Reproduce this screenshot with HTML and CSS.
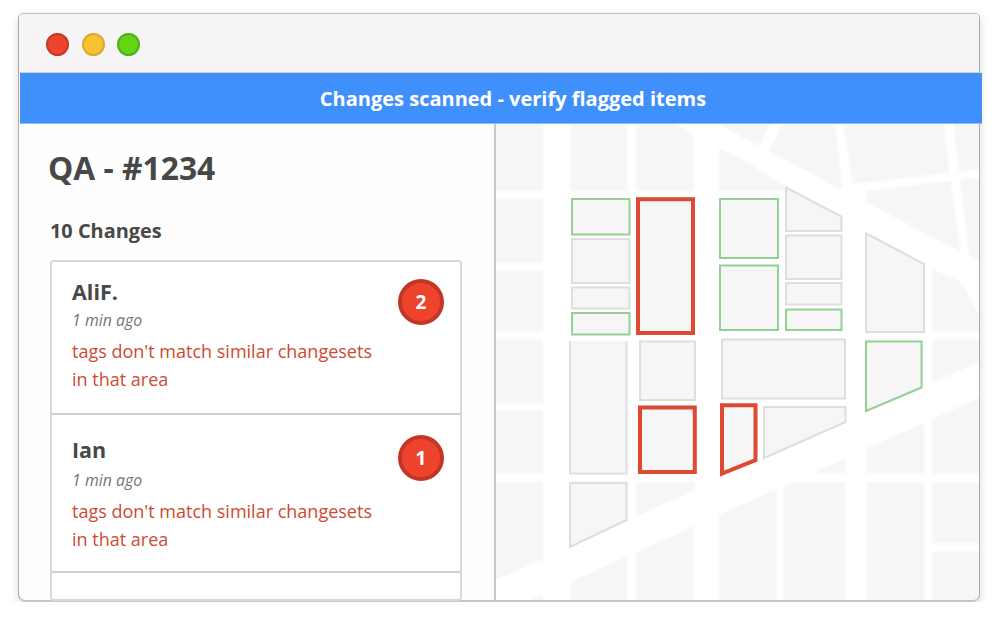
FILE: index.html
```html
<!DOCTYPE html>
<html lang="en">
<head>
<meta charset="utf-8">
<title>QA - #1234</title>
<link rel="stylesheet" href="styles.css">
</head>
<body>
<main class="window">
  <header class="titlebar">
    <span class="dot dot-red"></span>
    <span class="dot dot-yellow"></span>
    <span class="dot dot-green"></span>
  </header>
  <div class="banner">Changes scanned - verify flagged items</div>
  <div class="content">
    <section class="panel">
      <h1>QA - #1234</h1>
      <h2>10 Changes</h2>
      <ul class="changes">
        <li class="change">
          <div class="details">
            <h3>AliF.</h3>
            <time>1 min ago</time>
            <p>tags don't match similar changesets<br>in that area</p>
          </div>
          <span class="count">2</span>
        </li>
        <li class="change change-second">
          <div class="details">
            <h3>Ian</h3>
            <time>1 min ago</time>
            <p>tags don't match similar changesets<br>in that area</p>
          </div>
          <span class="count">1</span>
        </li>
        <li class="change change-empty"></li>
      </ul>
    </section>
    <section class="map">
      <svg viewBox="496 124 483 477" width="483" height="477" aria-label="Map">
        <defs>
          <filter id="soften" x="-5%" y="-5%" width="110%" height="110%"><feGaussianBlur stdDeviation="0.9"/></filter>
        </defs>
        <g class="roads" filter="url(#soften)">
          <rect x="543" y="110" width="28" height="510"/>
          <rect x="627.5" y="110" width="8.500" height="510"/>
          <rect x="694" y="110" width="25" height="510"/>
          <rect x="776" y="470" width="8" height="150"/>
          <rect x="845.500" y="200" width="21" height="420"/>
          <rect x="924.500" y="250" width="7.500" height="370"/>
          <rect x="480" y="191" width="310" height="7.500"/>
          <rect x="480" y="263" width="70" height="7.500"/>
          <rect x="480" y="332" width="510" height="7.500"/>
          <rect x="480" y="403.500" width="70" height="7"/>
          <rect x="480" y="473.500" width="510" height="8.500"/>
          <rect x="928" y="543.500" width="62" height="8"/>
          <polygon points="543,191 866,191 866,430 750,482 543,482"/>
          <polygon points="662,114 698,114 740,136 848,193 990,267 990,336 965,288 958,280 932,269 925,264 786,187 740,158 694,136"/>
          <polygon points="480,587 990,357 990,393 530,600 510,620 480,620"/>
          <polygon points="774,115 787,115 768,154 758,150"/>
          <polygon points="834,115 842,115 855,200 843,195"/>
          <polygon points="848,184.500 990,168 990,176 848,193"/>
          <polygon points="942,115 952,115 970,262 961,256"/>
        </g>
        <g class="plots">
          <rect x="572" y="239" width="57.500" height="44"/>
          <rect x="572" y="287.500" width="57.500" height="21"/>
          <rect x="640" y="341.500" width="55" height="58.500"/>
          <rect x="722" y="339.500" width="123" height="59"/>
          <rect x="786" y="235.500" width="55.500" height="43.500"/>
          <rect x="786" y="283" width="55.500" height="21.500"/>
          <polygon points="786,187.500 841.500,216.500 841.500,231 786,231"/>
          <polygon points="866,233.500 924,264 924,332 866,332"/>
          <path d="M570 341V473.500H626.500V341"/>
          <polygon points="570,483 626.500,483 626.500,520 570,547"/>
          <polygon points="764,407 845.500,407 845.500,422 764,458"/>
        </g>
        <g class="plots verified">
          <rect x="572" y="199" width="57.500" height="35.500"/>
          <rect x="572" y="313" width="57.500" height="21.500"/>
          <rect x="720" y="199" width="58" height="59"/>
          <rect x="720" y="265.500" width="58" height="64.500"/>
          <rect x="786" y="309.500" width="55.500" height="20.500"/>
          <polygon points="866,341.500 921.500,341.500 921.500,387.500 866,411"/>
        </g>
        <g class="plots flagged">
          <rect x="638" y="199.200" width="55" height="133.800"/>
          <rect x="640" y="407.500" width="54.800" height="64.500"/>
          <polygon points="722,405.200 755.500,405.200 755.500,460.200 722,473.500"/>
        </g>
      </svg>
    </section>
  </div>
</main>
</body>
</html>
```

FILE: styles.css
```css
* {
  box-sizing: border-box;
}

body {
  margin: 0;
  padding: 13px 0 0 18px;
  background: #fff;
  color: #484848;
  font-family: "Open Sans", sans-serif;
}

h1, h2, h3, p, ul {
  margin: 0;
  padding: 0;
}

.window {
  width: 962px;
  height: 589px;
  border: 1px solid #aaa;
  border-top-color: #c4c1c2;
  border-bottom: 2px solid #c5c5c5;
  border-radius: 5px 5px 8px 8px;
  background: #fefefe;
  box-shadow: 0 4px 10px rgba(0, 0, 0, 0.15);
}

.titlebar {
  display: flex;
  align-items: center;
  gap: 12.5px;
  height: 59px;
  padding: 3px 0 0 27px;
  border-bottom: 1px solid #c9d2e0;
  border-radius: 4px 4px 0 0;
  background: #f6f4f5;
}

.dot {
  width: 23px;
  height: 23px;
  border: 2px solid;
  border-radius: 50%;
}

.dot-red {
  border-color: #c33827;
  background: #ee442d;
}

.dot-yellow {
  border-color: #d9aa2c;
  background: #f6c332;
}

.dot-green {
  border-color: #49b31a;
  background: #65d414;
}

.banner {
  width: 962px;
  height: 51px;
  margin-left: 1px;
  padding-left: 24px;
  border-bottom: 1px solid #8fbcfa;
  background: #4090fb;
  color: #fff;
  font-size: 20px;
  font-weight: 700;
  line-height: 51px;
  text-align: center;
}

.content {
  display: flex;
  height: 476px;
}

.panel {
  width: 477px;
  height: 476px;
  padding: 20px 0 0 29px;
  border-right: 2px solid #c8c8c8;
}

h1 {
  font-size: 31.8px;
  font-weight: 700;
  line-height: 48px;
}

h2 {
  margin: 24px 0 14px 2px;
  font-size: 19.9px;
  font-weight: 700;
  line-height: 30px;
}

.changes {
  width: 412px;
  height: 341px;
  margin-left: 2px;
  border: 2px solid #d9d7d8;
  border-radius: 4px;
  background: #fff;
  list-style: none;
}

.change {
  display: flex;
  justify-content: space-between;
  height: 153px;
  padding: 17px 16px 0 20px;
  border-bottom: 2px solid #d0d0d0;
}

.change-second {
  height: 158px;
  padding-top: 20px;
}

.change-empty {
  height: 24px;
  border: 0;
}

h3 {
  height: 29px;
  font-size: 21.5px;
  font-weight: 700;
  line-height: 26px;
}

time {
  display: block;
  color: #757575;
  font-size: 15.9px;
  font-style: italic;
  line-height: 24px;
}

.change-second h3 {
  height: 33px;
  line-height: 29px;
}

.change p {
  margin-top: 5px;
  color: #ce4a35;
  font-size: 18px;
  line-height: 28px;
  white-space: nowrap;
}

.count {
  width: 46px;
  height: 46px;
  border: 4px solid #c33626;
  border-radius: 50%;
  background: #ee442d;
  color: #fff;
  font-size: 19px;
  font-weight: 700;
  line-height: 38px;
  text-align: center;
}

.map {
  width: 483px;
  height: 476px;
  overflow: hidden;
  border-radius: 0 0 6px 0;
  background: #f6f6f6;
}

.map svg {
  display: block;
}

.roads {
  fill: #fff;
}

.plots {
  fill: #f6f6f6;
  stroke: #dedede;
  stroke-width: 2px;
}

.verified {
  stroke: #93d093;
}

.flagged {
  stroke: #dd4932;
  stroke-width: 4px;
}
```
